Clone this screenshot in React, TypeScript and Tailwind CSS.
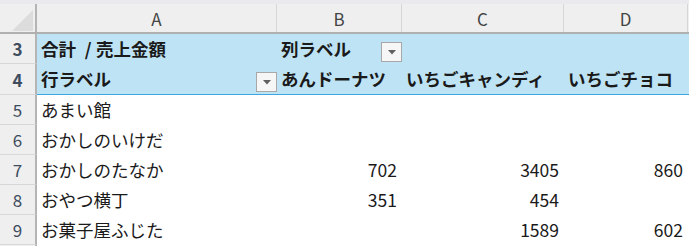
const font = { fontFamily: '"Noto Sans CJK JP", "Noto Sans", sans-serif' };

const cols = "grid grid-cols-[37px_240px_125px_162px_124px_1fr]";

type Row = { n: number; name: string; b?: string; c?: string; d?: string };

const rows: Row[] = [
  { n: 5, name: "あまい館" },
  { n: 6, name: "おかしのいけだ" },
  { n: 7, name: "おかしのたなか", b: "702", c: "3405", d: "860" },
  { n: 8, name: "おやつ横丁", b: "351", c: "454" },
  { n: 9, name: "お菓子屋ふじた", c: "1589", d: "602" },
];

function FilterButton() {
  return (
    <div className="absolute right-0 bottom-[2px] w-[21px] h-[20px] border border-[#a8a8a8] bg-[#f6f6f6] flex items-center justify-center">
      <svg width="8" height="5" viewBox="0 0 8 5">
        <path d="M0 0 H8 L4 4.5 Z" fill="#606060" />
      </svg>
    </div>
  );
}

function RowHead({ n, last }: { n?: number; last?: boolean }) {
  return (
    <div
      className={`flex items-center justify-center bg-[#efefef] border-r-2 border-[#b4b4b4] text-[17px] text-[#3e4c5e] ${
        last ? "" : "border-b border-b-[#d8d8d8]"
      }`}
    >
      {n}
    </div>
  );
}

export default function App() {
  return (
    <div className="w-[689px] h-[246px] overflow-hidden bg-white text-[#1a1a1a] leading-none" style={font}>
      <div className="h-[4px] bg-[#e9e9ee]" />

      {/* column headers */}
      <div className={`${cols} h-[30px] bg-[#efefef] border-b-2 border-[#b0b0b0] text-[17px] text-[#444]`}>
        <div className="relative border-r-2 border-[#b4b4b4]">
          <svg className="absolute left-[12px] top-[6px]" width="22" height="22" viewBox="0 0 22 22">
            <path d="M21 0 V21 H0 Z" fill="#dcdcdc" />
          </svg>
        </div>
        <div className="flex items-center justify-center border-r border-[#d6d6d6]">A</div>
        <div className="flex items-center justify-center border-r border-[#d6d6d6]">B</div>
        <div className="flex items-center justify-center border-r border-[#d6d6d6]">C</div>
        <div className="flex items-center justify-center border-r border-[#d6d6d6]">D</div>
        <div />
      </div>

      {/* pivot header rows */}
      <div className={`${cols} h-[30px] text-[17.5px] font-bold`}>
        <RowHead n={3} />
        <div className="flex items-center pl-[4px] bg-[#bee3f4] whitespace-pre">
          合計{"\u2002"}/{"\u2005"}売上金額
        </div>
        <div className="relative flex items-center pl-[4px] bg-[#bee3f4]">
          列ラベル
          <FilterButton />
        </div>
        <div className="bg-[#bee3f4]" />
        <div className="bg-[#bee3f4]" />
        <div className="bg-[#bee3f4]" />
      </div>
      <div className={`${cols} h-[31px] text-[17.5px] font-bold`}>
        <RowHead n={4} />
        <div className="relative flex items-center pl-[4px] bg-[#bee3f4] border-b border-[#3aa7df]">
          行ラベル
          <FilterButton />
        </div>
        <div className="flex items-center pl-[4px] bg-[#bee3f4] border-b border-[#3aa7df] whitespace-nowrap">あんドーナツ</div>
        <div className="flex items-center pl-[4px] bg-[#bee3f4] border-b border-[#3aa7df] whitespace-nowrap">いちごキャンディ</div>
        <div className="flex items-center pl-[4px] bg-[#bee3f4] border-b border-[#3aa7df] whitespace-nowrap">いちごチョコ</div>
        <div className="bg-[#bee3f4] border-b border-[#3aa7df]" />
      </div>

      {/* body rows */}
      {rows.map((r) => (
        <div key={r.n} className={`${cols} h-[30px] text-[17.5px]`}>
          <RowHead n={r.n} />
          <div className="flex items-center pl-[4px]">{r.name}</div>
          <div className="flex items-center justify-end pr-[5px]">{r.b}</div>
          <div className="flex items-center justify-end pr-[5px]">{r.c}</div>
          <div className="flex items-center justify-end pr-[5px]">{r.d}</div>
          <div />
        </div>
      ))}
      <div className={`${cols} h-[30px]`}>
        <RowHead last />
      </div>
    </div>
  );
}
